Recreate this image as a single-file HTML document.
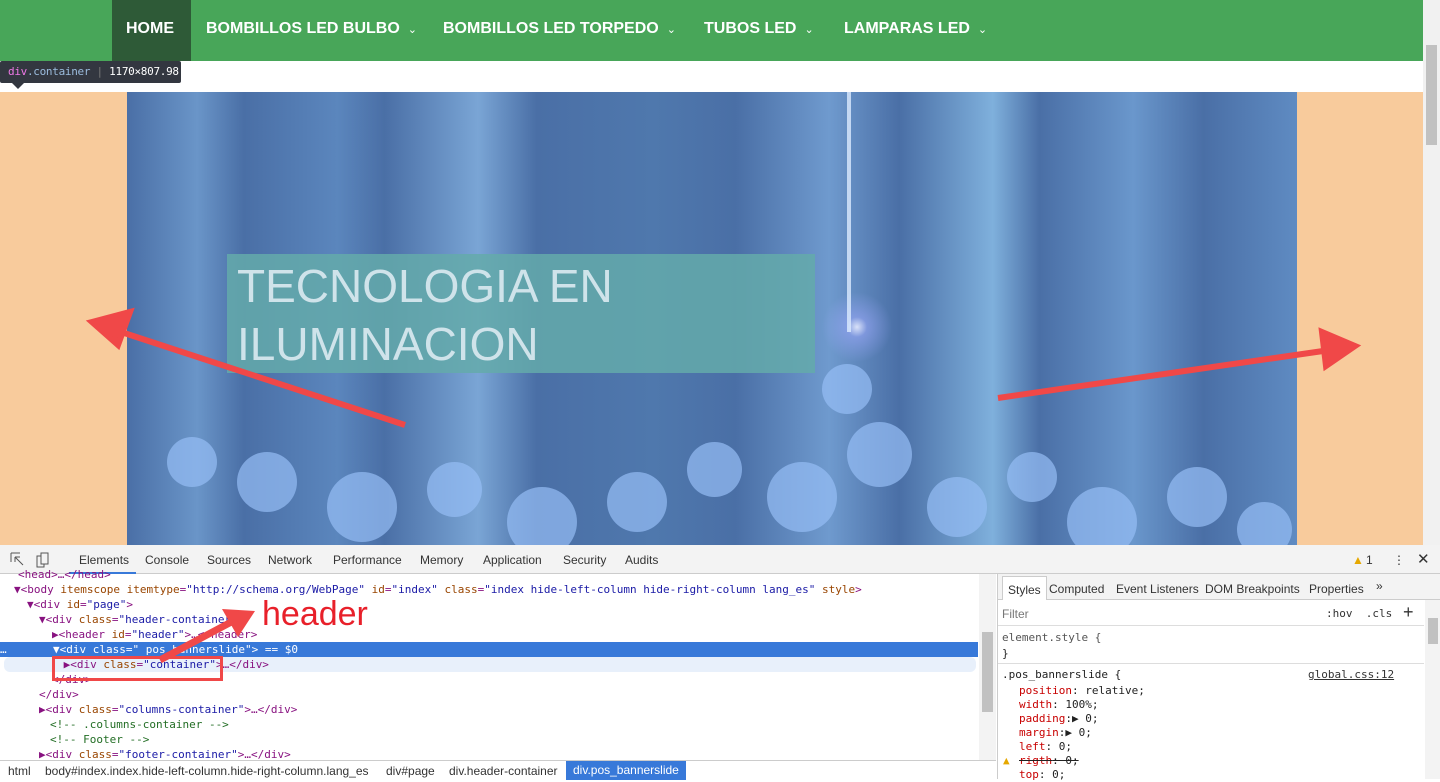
<!DOCTYPE html>
<html><head><meta charset="utf-8"><style>
*{margin:0;padding:0;box-sizing:border-box}
body{width:1440px;height:779px;overflow:hidden;position:relative;font-family:"Liberation Sans",sans-serif;background:#fff}
.abs{position:absolute}
.nav{left:0;top:0;width:1423px;height:61px;background:#48a659}
.nav span{position:absolute;top:0;height:61px;line-height:57px;color:#fff;font-weight:bold;font-size:16px}
.nav i{font-style:normal;font-size:11px;font-weight:normal;margin-left:8px}
.banner{left:0;top:92px;width:1423px;height:453px;background:#f8cb9c}
.img{left:127px;top:92px;width:1170px;height:453px;overflow:hidden;
background:
radial-gradient(circle at 730px 235px,rgba(230,235,255,.9) 0,rgba(160,170,255,.5) 10px,transparent 35px),
linear-gradient(90deg,#4a6fa6 0,#6a95c8 6%,#4a6fa6 10%,#5b86bd 18%,#4a6fa6 22%,#7aa5d5 30%,#4a6fa6 35%,#4f78ad 45%,#4a6fa6 52%,#6f9ace 60%,#4a6fa6 66%,#7fb0dc 74%,#4a6fa6 78%,#6a97cc 86%,#4a6fa6 92%,#5f8bc2 100%)}
.b{position:absolute;border-radius:50%;background:rgba(150,190,245,.7)}
.txt{left:227px;top:254px;width:588px;height:119px;background:rgba(100,170,170,.85);color:#cfe3ea;font-size:46px;line-height:58px;padding:3px 10px;font-weight:300}
.dt{left:0;top:545px;width:1440px;height:234px;background:#fff;font-family:"DejaVu Sans Mono","Liberation Mono",monospace;font-size:11px}
.tb{left:0;top:0;width:1440px;height:29px;background:#f3f3f3;border-bottom:1px solid #ccc;font-family:"Liberation Sans",sans-serif;font-size:12px;color:#333}
.tb span{position:absolute;top:8px}
.ln{position:absolute;left:0;height:15px;line-height:15px;white-space:pre;color:#881280;width:978px}
.at{color:#994500}.av{color:#1a1aa6}.cm{color:#236e25}
.bc{left:0;top:215px;width:996px;height:19px;border-top:1px solid #ccc;background:#fff;font-family:"Liberation Sans",sans-serif;font-size:12px;color:#333}
.bc span{position:absolute;top:3px}
.rp{left:997px;top:29px;width:443px;height:205px;border-left:1px solid #ccc;background:#fff}
.rp .ln{color:#222;width:420px}
.pr{color:#c80000}
</style></head><body>
<div class="abs nav">
<div class="abs" style="left:112px;top:0;width:79px;height:61px;background:#2e5a37"></div>
<span style="left:126px">HOME</span>
<span style="left:206px">BOMBILLOS LED BULBO<i>⌄</i></span>
<span style="left:443px">BOMBILLOS LED TORPEDO<i>⌄</i></span>
<span style="left:704px">TUBOS LED<i>⌄</i></span>
<span style="left:844px">LAMPARAS LED<i>⌄</i></span>
</div>
<div class="abs" style="left:1423px;top:0;width:17px;height:545px;background:#f1f1f1"><div style="position:absolute;left:3px;top:45px;width:11px;height:100px;background:#c1c1c1"></div></div>
<div class="abs" style="left:0;top:61px;width:181px;height:22px;background:#333740;border-radius:2px;color:#fff;font-family:'DejaVu Sans Mono',monospace;font-size:11px;line-height:22px;padding-left:8px;letter-spacing:-.3px"><span style="color:#ee78e6">div</span><span style="color:#9bbbdc">.container</span> <span style="color:#777">|</span> 1170×807.98</div>
<div class="abs" style="left:12px;top:83px;border:6px solid transparent;border-top-color:#333740;border-bottom:0"></div>
<div class="abs banner"></div>
<div class="abs img">
<div style="position:absolute;left:720px;top:0;width:4px;height:240px;background:rgba(220,235,255,.8)"></div>
<div class="b" style="left:40px;top:345px;width:50px;height:50px"></div>
<div class="b" style="left:110px;top:360px;width:60px;height:60px"></div>
<div class="b" style="left:200px;top:380px;width:70px;height:70px"></div>
<div class="b" style="left:300px;top:370px;width:55px;height:55px"></div>
<div class="b" style="left:380px;top:395px;width:70px;height:70px"></div>
<div class="b" style="left:480px;top:380px;width:60px;height:60px"></div>
<div class="b" style="left:560px;top:350px;width:55px;height:55px"></div>
<div class="b" style="left:640px;top:370px;width:70px;height:70px"></div>
<div class="b" style="left:695px;top:272px;width:50px;height:50px"></div>
<div class="b" style="left:720px;top:330px;width:65px;height:65px"></div>
<div class="b" style="left:800px;top:385px;width:60px;height:60px"></div>
<div class="b" style="left:880px;top:360px;width:50px;height:50px"></div>
<div class="b" style="left:940px;top:395px;width:70px;height:70px"></div>
<div class="b" style="left:1040px;top:375px;width:60px;height:60px"></div>
<div class="b" style="left:1110px;top:410px;width:55px;height:55px"></div>
</div>
<div class="abs txt">TECNOLOGIA EN<br>ILUMINACION</div>
<svg class="abs" style="left:0;top:0" width="1440" height="545">
<g stroke="#f04848" stroke-width="6" fill="#f04848">
<line x1="405" y1="425" x2="115" y2="330"/><polygon points="92,322 130,312 118,345"/>
<line x1="998" y1="398" x2="1330" y2="350"/><polygon points="1355,346 1322,332 1326,366"/>
</g></svg>
<div class="abs dt">
<div class="abs tb">
<svg style="position:absolute;left:10px;top:7px" width="40" height="16"><path d="M1 1h9M1 1v9M5 5l8 8M5 5h5M5 5v5" stroke="#555" fill="none"/><rect x="27" y="4" width="7" height="11" stroke="#555" fill="none"/><rect x="31" y="1" width="7" height="11" stroke="#555" fill="#f3f3f3"/></svg>
<span style="left:79px">Elements</span><div style="position:absolute;left:69px;top:27px;width:67px;height:2px;background:#3879d9"></div>
<span style="left:145px">Console</span><span style="left:207px">Sources</span><span style="left:268px">Network</span><span style="left:333px">Performance</span><span style="left:420px">Memory</span><span style="left:483px">Application</span><span style="left:563px">Security</span><span style="left:625px">Audits</span>
<span style="left:1352px;color:#e6a800">▲</span><span style="left:1366px">1</span><span style="left:1393px">⋮</span><span style="left:1417px;font-size:15px;top:5px">✕</span>
</div>
<div class="ln" style="top:22px;left:18px">&lt;head&gt;…&lt;/head&gt;</div>
<div class="ln" style="top:37px;left:14px">▼&lt;body <span class="at">itemscope itemtype</span>=<span class="av">"http://schema.org/WebPage"</span> <span class="at">id</span>=<span class="av">"index"</span> <span class="at">class</span>=<span class="av">"index hide-left-column hide-right-column lang_es"</span> <span class="at">style</span>&gt;</div>
<div class="ln" style="top:52px;left:27px">▼&lt;div <span class="at">id</span>=<span class="av">"page"</span>&gt;</div>
<div class="ln" style="top:67px;left:39px">▼&lt;div <span class="at">class</span>=<span class="av">"header-container"</span>&gt;</div>
<div class="ln" style="top:82px;left:52px">▶&lt;header <span class="at">id</span>=<span class="av">"header"</span>&gt;…&lt;/header&gt;</div>
<div class="ln" style="top:97px;left:0;background:#3879d9;color:#fff">…       ▼&lt;div class=" pos_bannerslide"&gt; == $0</div>
<div class="ln" style="top:112px;left:4px;width:972px;background:#e8f0fb;border-radius:6px">         ▶&lt;div <span class="at">class</span>=<span class="av">"container"</span>&gt;…&lt;/div&gt;</div>
<div class="ln" style="top:127px;left:52px">&lt;/div&gt;</div>
<div class="ln" style="top:142px;left:39px">&lt;/div&gt;</div>
<div class="ln" style="top:157px;left:39px">▶&lt;div <span class="at">class</span>=<span class="av">"columns-container"</span>&gt;…&lt;/div&gt;</div>
<div class="ln cm" style="top:172px;left:50px">&lt;!-- .columns-container --&gt;</div>
<div class="ln cm" style="top:187px;left:50px">&lt;!-- Footer --&gt;</div>
<div class="ln" style="top:202px;left:39px">▶&lt;div <span class="at">class</span>=<span class="av">"footer-container"</span>&gt;…&lt;/div&gt;</div>
<div class="abs" style="left:979px;top:29px;width:17px;height:186px;background:#f3f3f3"><div style="position:absolute;left:3px;top:58px;width:11px;height:80px;background:#c1c1c1"></div></div>
<div class="abs" style="left:52px;top:111px;width:171px;height:25px;border:3px solid #f04848"></div>
<div class="abs" style="left:262px;top:50px;color:#e8202a;font-family:'Liberation Sans',sans-serif;font-size:34px">header</div>
<svg class="abs" style="left:0;top:0" width="300" height="130"><line x1="160" y1="115" x2="235" y2="75" stroke="#f04848" stroke-width="7"/><polygon points="255,66 222,64 238,92" fill="#f04848"/></svg>
<div class="abs bc"><span style="left:8px">html</span><span style="left:45px">body#index.index.hide-left-column.hide-right-column.lang_es</span><span style="left:386px">div#page</span><span style="left:449px">div.header-container</span><span style="left:566px;top:0;height:19px;line-height:19px;padding:0 7px;background:#3879d9;color:#fff">div.pos_bannerslide</span></div>
<div class="abs rp">
<div style="position:absolute;left:0;top:0;width:443px;height:26px;background:#f3f3f3;border-bottom:1px solid #ccc;font-family:'Liberation Sans',sans-serif;font-size:12px;color:#333">
<span style="position:absolute;left:4px;top:2px;height:24px;padding:6px 5px;background:#fff;border:1px solid #ccc;border-bottom:0">Styles</span>
<span style="position:absolute;left:51px;top:8px">Computed</span><span style="position:absolute;left:118px;top:8px">Event Listeners</span><span style="position:absolute;left:207px;top:8px">DOM Breakpoints</span><span style="position:absolute;left:311px;top:8px">Properties</span><span style="position:absolute;left:378px;top:5px">»</span></div>
<div style="position:absolute;left:0;top:26px;width:426px;height:26px;border-bottom:1px solid #ddd;font-family:'Liberation Sans',sans-serif;font-size:12px;color:#777;padding:7px 4px">Filter<span style="position:absolute;left:328px;color:#333;font-family:'DejaVu Sans Mono',monospace;font-size:11px">:hov &nbsp;.cls</span><span style="position:absolute;left:405px;top:2px;font-size:18px;color:#333">+</span></div>
<div class="ln" style="top:56px;left:4px;color:#555">element.style {</div>
<div class="ln" style="top:72px;left:4px">}</div>
<div style="position:absolute;left:0;top:89px;width:426px;border-top:1px solid #ddd"></div>
<div class="ln" style="top:93px;left:4px">.pos_bannerslide {<span style="position:absolute;left:306px;color:#333;text-decoration:underline">global.css:12</span></div>
<div class="ln" style="top:109px;left:21px"><span class="pr">position</span>: relative;</div>
<div class="ln" style="top:123px;left:21px"><span class="pr">width</span>: 100%;</div>
<div class="ln" style="top:137px;left:21px"><span class="pr">padding</span>:▶ 0;</div>
<div class="ln" style="top:151px;left:21px"><span class="pr">margin</span>:▶ 0;</div>
<div class="ln" style="top:165px;left:21px"><span class="pr">left</span>: 0;</div>
<div class="ln" style="top:179px;left:21px;text-decoration:line-through"><span class="pr">rigth</span>: 0;</div>
<div class="ln" style="top:179px;left:5px;color:#e6a800">▲</div>
<div class="ln" style="top:193px;left:21px"><span class="pr">top</span>: 0;</div>
<div style="position:absolute;left:427px;top:26px;width:16px;height:179px;background:#f3f3f3"><div style="position:absolute;left:3px;top:18px;width:10px;height:26px;background:#c1c1c1"></div></div>
</div>
</div>
</body></html>
